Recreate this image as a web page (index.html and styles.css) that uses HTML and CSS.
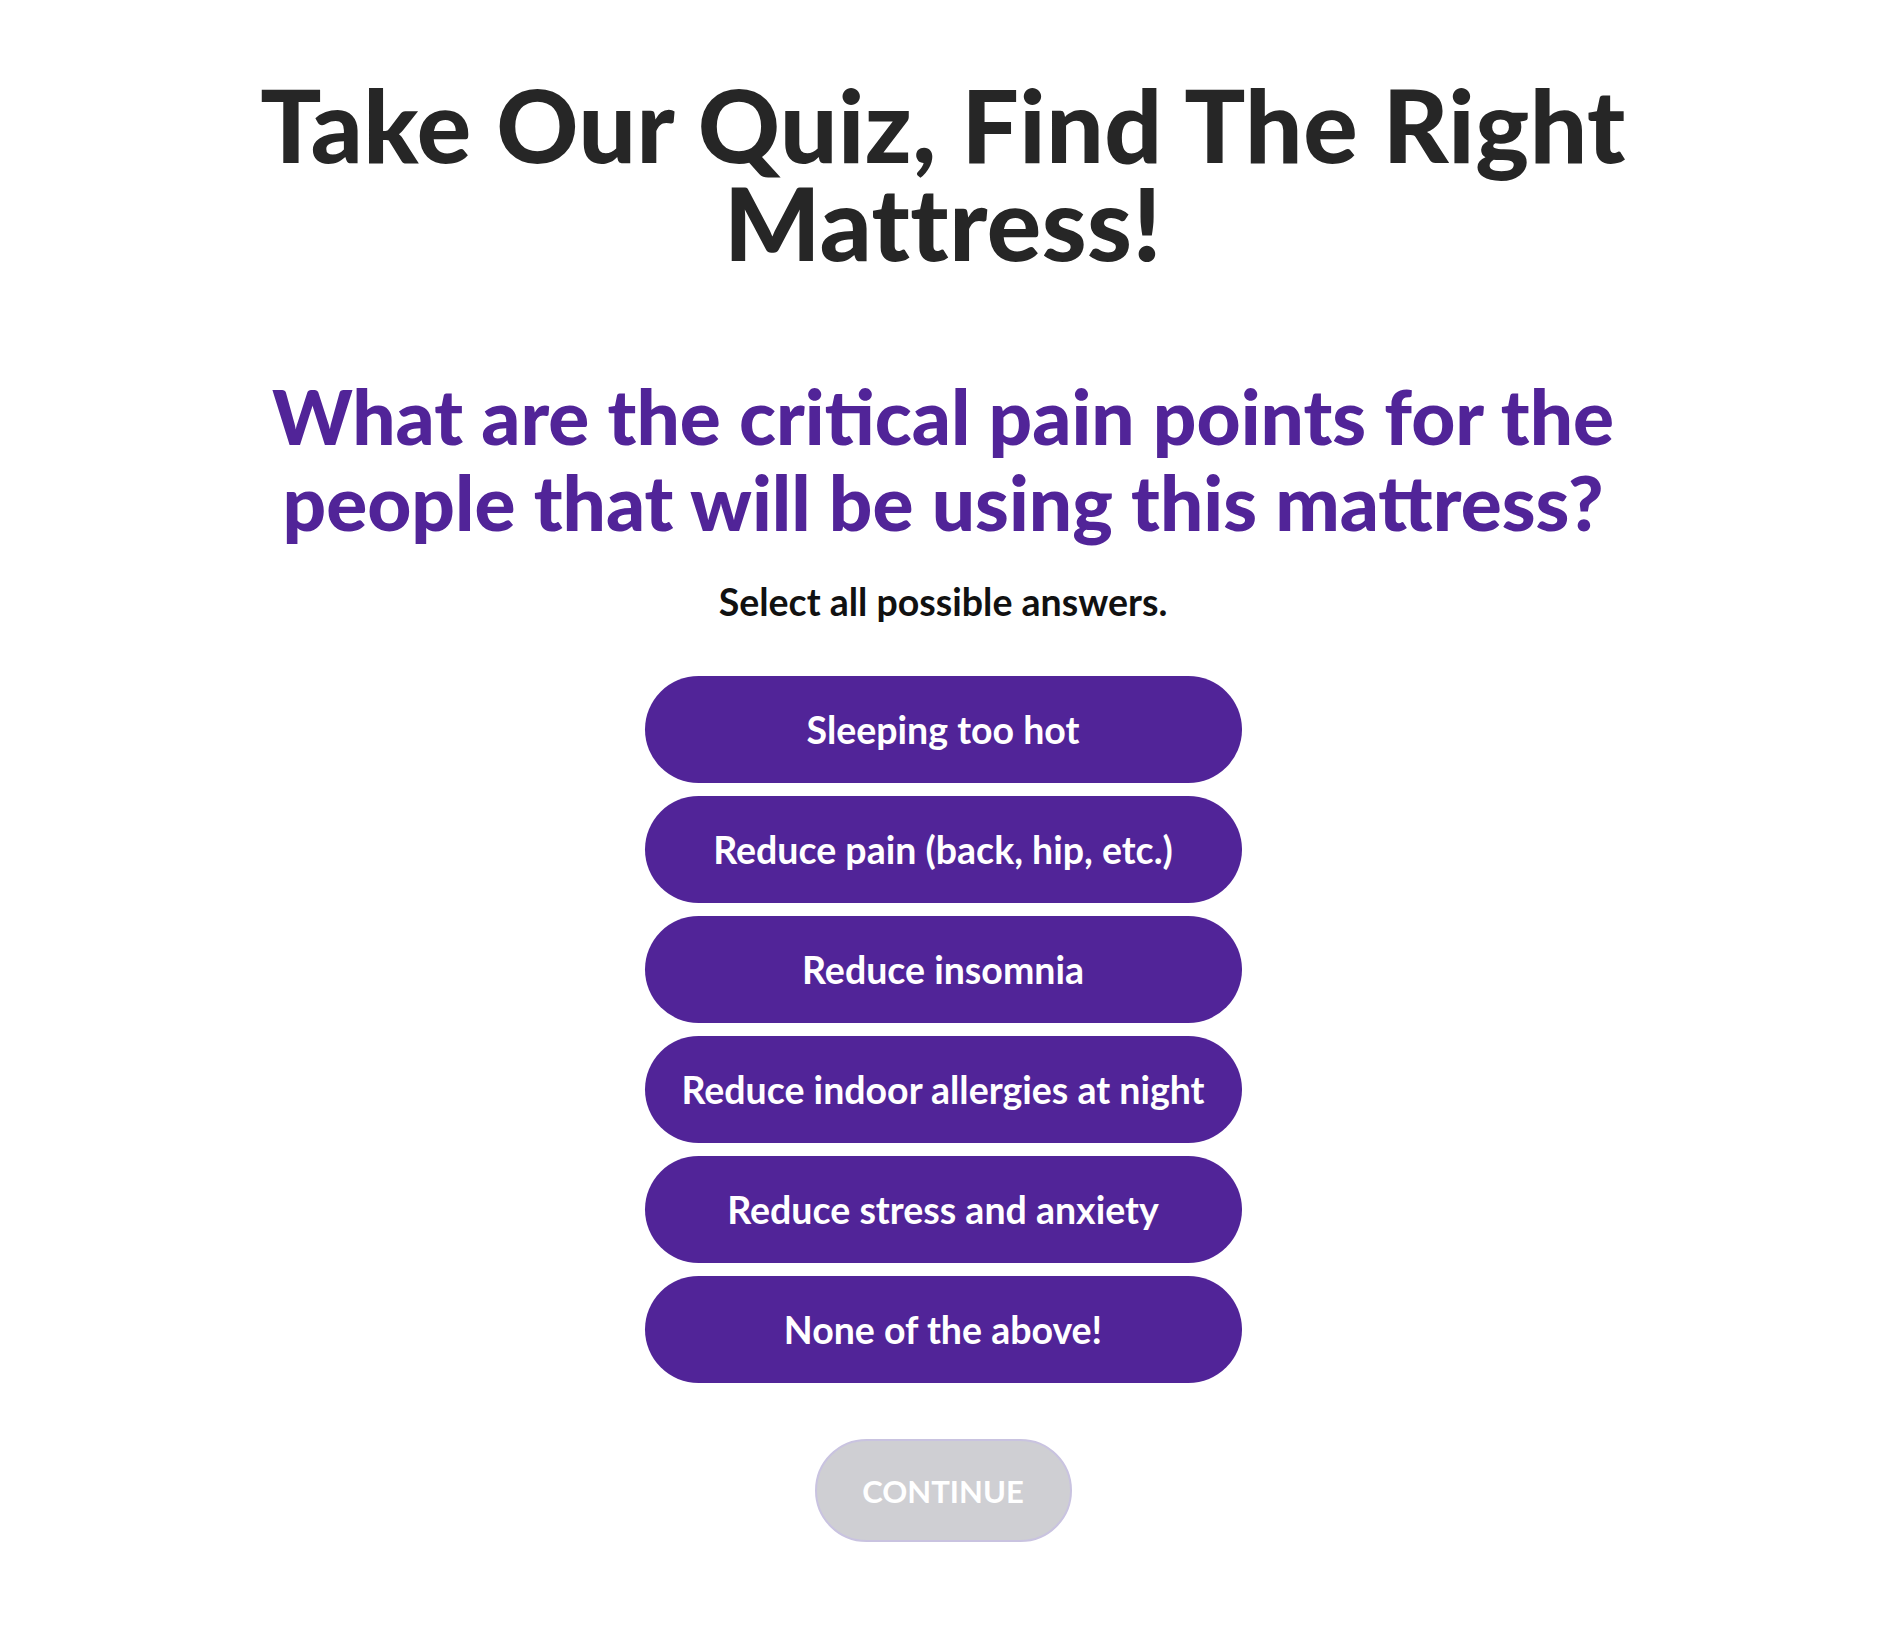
FILE: index.html
```html
<!DOCTYPE html>
<html lang="en">
<head>
<meta charset="utf-8">
<title>Mattress Quiz</title>
<link rel="stylesheet" href="styles.css">
</head>
<body>
<main class="quiz">
  <h1 class="quiz-title">Take Our Quiz, Find The Right<br>Mattress!</h1>
  <h2 class="quiz-question">What are the critical pain points for the<br>people that will be using this mattress?</h2>
  <p class="quiz-hint">Select all possible answers.</p>
  <div class="options">
    <button class="option">Sleeping too hot</button>
    <button class="option">Reduce pain (back, hip, etc.)</button>
    <button class="option">Reduce insomnia</button>
    <button class="option">Reduce indoor allergies at night</button>
    <button class="option">Reduce stress and anxiety</button>
    <button class="option">None of the above!</button>
  </div>
  <button class="continue" disabled>CONTINUE</button>
</main>
</body>
</html>
```
FILE: styles.css
```css
html, body {
  margin: 0;
  padding: 0;
  background: #ffffff;
}
body {
  font-family: Lato, "Liberation Sans", sans-serif;
  width: 1886px;
  min-height: 1625px;
}
.quiz {
  display: flex;
  flex-direction: column;
  align-items: center;
  padding-top: 75px;
}
.quiz-title {
  margin: 0;
  font-size: 101.5px;
  line-height: 98px;
  font-weight: 900;
  color: #262626;
  text-align: center;
  letter-spacing: 0.5px;
}
.quiz-question {
  margin: 101px 0 0;
  font-size: 76.5px;
  line-height: 86px;
  font-weight: 900;
  color: #512498;
  text-align: center;
}
.quiz-hint {
  margin: 38px 0 0;
  font-size: 37.5px;
  line-height: 40px;
  font-weight: 700;
  color: #111111;
}
.options {
  margin-top: 54px;
  display: flex;
  flex-direction: column;
  gap: 13px;
}
.option {
  width: 597px;
  height: 107px;
  border: none;
  border-radius: 54px;
  background: #512498;
  color: #ffffff;
  font-family: Lato, "Liberation Sans", sans-serif;
  font-weight: 700;
  font-size: 37.5px;
  padding: 0;
}
.continue {
  margin-top: 56px;
  width: 257px;
  height: 103px;
  border: 2px solid #c9c3e0;
  border-radius: 52px;
  background: #cfcfd3;
  color: #ffffff;
  font-family: Lato, "Liberation Sans", sans-serif;
  font-weight: 700;
  font-size: 31px;
  padding: 0;
}
```
